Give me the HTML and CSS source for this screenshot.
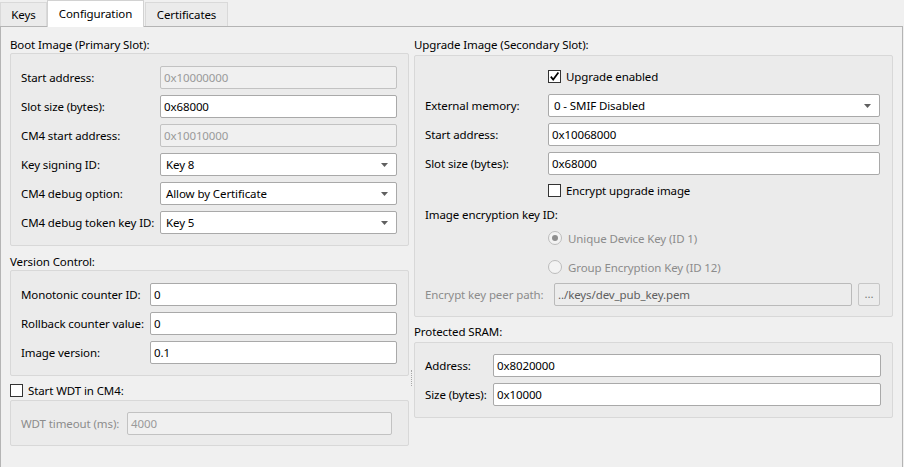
FILE: index.html
```html
<!DOCTYPE html>
<html>
<head>
<meta charset="utf-8">
<link rel="stylesheet" href="styles.css">
</head>
<body>
<div class="tabs">
  <div class="tab tab-keys">Keys</div>
  <div class="tab tab-config active">Configuration</div>
  <div class="tab tab-certs">Certificates</div>
</div>
<div class="pane">
  <div class="col col-left">
    <div class="title">Boot Image (Primary Slot):</div>
    <div class="box box-boot">
      <div class="grid grid-boot">
        <div class="lbl">Start address:</div><div class="field disabled">0x10000000</div>
        <div class="lbl">Slot size (bytes):</div><div class="field">0x68000</div>
        <div class="lbl">CM4 start address:</div><div class="field disabled">0x10010000</div>
        <div class="lbl">Key signing ID:</div><div class="field combo"><span>Key 8</span><svg class="arrow" width="7" height="4" viewBox="0 0 7 4"><path d="M0 0H7L3.5 4Z"/></svg></div>
        <div class="lbl">CM4 debug option:</div><div class="field combo"><span>Allow by Certificate</span><svg class="arrow" width="7" height="4" viewBox="0 0 7 4"><path d="M0 0H7L3.5 4Z"/></svg></div>
        <div class="lbl">CM4 debug token key ID:</div><div class="field combo"><span>Key 5</span><svg class="arrow" width="7" height="4" viewBox="0 0 7 4"><path d="M0 0H7L3.5 4Z"/></svg></div>
      </div>
    </div>

    <div class="title title-version">Version Control:</div>
    <div class="box box-version">
      <div class="grid grid-version">
        <div class="lbl">Monotonic counter ID:</div><div class="field">0</div>
        <div class="lbl">Rollback counter value:</div><div class="field">0</div>
        <div class="lbl">Image version:</div><div class="field">0.1</div>
      </div>
    </div>

    <div class="check-line wdt-check"><span class="cb"></span><span>Start WDT in CM4:</span></div>
    <div class="box box-wdt">
      <div class="grid grid-wdt">
        <div class="lbl muted">WDT timeout (ms):</div><div class="field disabled">4000</div>
      </div>
    </div>
  </div>

  <div class="splitter"><div class="grip"></div></div>

  <div class="col col-right">
    <div class="title">Upgrade Image (Secondary Slot):</div>
    <div class="box box-upgrade">
      <div class="check-line tall indent"><span class="cb checked"><svg width="11" height="11" viewBox="0 0 11 11"><path d="M1.8 5.6L4.2 8.6L9.4 1.6" fill="none" stroke="#000" stroke-width="1.7"/></svg></span><span>Upgrade enabled</span></div>
      <div class="grid grid-upgrade r-gap">
        <div class="lbl">External memory:</div><div class="field combo"><span>0 - SMIF Disabled</span><svg class="arrow" width="7" height="4" viewBox="0 0 7 4"><path d="M0 0H7L3.5 4Z"/></svg></div>
        <div class="lbl">Start address:</div><div class="field">0x10068000</div>
        <div class="lbl">Slot size (bytes):</div><div class="field">0x68000</div>
      </div>
      <div class="check-line indent m-encrypt"><span class="cb"></span><span>Encrypt upgrade image</span></div>
      <div class="line m-keylabel">Image encryption key ID:</div>
      <div class="check-line indent muted m-radio1"><span class="radio on"><span class="dot"></span></span><span>Unique Device Key (ID 1)</span></div>
      <div class="check-line indent muted m-radio2"><span class="radio"></span><span>Group Encryption Key (ID 12)</span></div>
      <div class="grid grid-peer">
        <div class="lbl muted">Encrypt key peer path:</div><div class="field disabled peer">../keys/dev_pub_key.pem</div><div class="btn">...</div>
      </div>
    </div>

    <div class="title title-sram">Protected SRAM:</div>
    <div class="box box-sram">
      <div class="grid grid-sram">
        <div class="lbl">Address:</div><div class="field">0x8020000</div>
        <div class="lbl">Size (bytes):</div><div class="field">0x10000</div>
      </div>
    </div>
  </div>
</div>
</body>
</html>
```
FILE: styles.css
```css
html, body {
  margin: 0;
  padding: 0;
}
body {
  width: 904px;
  height: 467px;
  overflow: hidden;
  background: #f0f0f0;
  font-family: "Noto Sans", "Open Sans", sans-serif;
  font-size: 11.5px;
  letter-spacing: -0.1px;
  color: #000;
}

/* tabs */
.tabs {
  display: flex;
  align-items: flex-end;
  height: 26px;
}
.tab {
  box-sizing: border-box;
  height: 24px;
  border: 1px solid #d9d9d9;
  border-bottom: none;
  background: #ebebeb;
  text-align: center;
  line-height: 23px;
}
.tab-keys { width: 47px; }
.tab-config { width: 97px; }
.tab-certs { width: 83px; margin-left: 1px; }
.tab.active {
  position: relative;
  z-index: 1;
  height: 27px;
  margin-bottom: -1px;
  background: #fff;
  border-color: #d2d2d2;
  line-height: 25px;
}

/* pane */
.pane {
  box-sizing: border-box;
  width: 903px;
  height: 441px;
  border: 1px solid #b4b4b4;
  border-bottom: none;
  padding-left: 9px;
  display: flex;
  align-items: flex-start;
}
.col-left { width: 399px; }
.col-right { width: 479px; }
.splitter { width: 5px; display: flex; justify-content: center; }
.grip {
  width: 0;
  height: 16px;
  margin-top: 343px;
  border-left: 1px dotted #a8a8a8;
}

.title {
  height: 16px;
  line-height: 16px;
  margin-top: 10px;
}
.title-version { margin-top: 8px; }
.title-sram { margin-top: 7px; }

.box {
  border: 1px solid #d8d8d8;
  border-radius: 2px;
  background: #ebebeb;
}
.box-boot { padding: 12px 11px 11px 10px; }
.box-version { padding: 12px 11px 11px 10px; }
.box-wdt { padding: 11px 16px 10px 10px; margin-top: 2px; }
.box-upgrade { padding: 9px 12px 10px 10px; margin-top: 2px; }
.box-sram { padding: 11px 11px 11px 10px; margin-top: 2px; }

.grid {
  display: grid;
  grid-auto-rows: 23px;
  row-gap: 6px;
  align-items: center;
}
.grid-boot { grid-template-columns: 139px 1fr; }
.grid-version { grid-template-columns: 129px 1fr; }
.grid-wdt { grid-template-columns: 106px 1fr; }
.grid-upgrade { grid-template-columns: 123px 1fr; }
.r-gap { margin-top: 6px; }
.grid-peer { grid-template-columns: 123px 1fr 22px; column-gap: 6px; margin-top: 8px; }
.grid-sram { grid-template-columns: 68px 1fr; }

.lbl { white-space: nowrap; }
.muted { color: #8c8c8c; }

.field {
  box-sizing: border-box;
  height: 23px;
  border: 1px solid #a9a9a9;
  border-radius: 2px;
  background: #fff;
  padding: 0 3px;
  line-height: 21px;
  white-space: nowrap;
  overflow: hidden;
}
.field.disabled {
  background: #f0f0f0;
  border-color: #c2c2c2;
  color: #9a9a9a;
}
.field.peer {
  background: #ececec;
  border-color: #bababa;
  color: #5e5e5e;
}
.combo {
  display: flex;
  justify-content: space-between;
  align-items: center;
  padding: 0 8px 0 5px;
}
.arrow { fill: #606060; }

.btn {
  box-sizing: border-box;
  height: 23px;
  border: 1px solid #c6c6c6;
  border-radius: 2px;
  background: #ececec;
  color: #7a7a7a;
  text-align: center;
  line-height: 19px;
}

.check-line {
  display: flex;
  align-items: center;
  height: 16px;
  gap: 5px;
}
.check-line.tall { height: 23px; }
.indent { padding-left: 123px; }
.wdt-check { margin-top: 6px; }
.m-encrypt { margin-top: 7px; }
.m-radio1 { margin-top: 7px; gap: 6px; }
.m-radio2 { margin-top: 13px; gap: 6px; }
.line { height: 16px; line-height: 16px; }
.m-keylabel { margin-top: 9px; }

.cb {
  box-sizing: border-box;
  width: 13px;
  height: 13px;
  border: 1px solid #333;
  background: #fff;
  display: flex;
  align-items: center;
  justify-content: center;
  flex: none;
}
.radio {
  box-sizing: border-box;
  width: 14px;
  height: 14px;
  border: 1px solid #bcbcbc;
  border-radius: 50%;
  background: #f3f3f3;
  display: flex;
  align-items: center;
  justify-content: center;
  flex: none;
}
.dot {
  width: 6px;
  height: 6px;
  border-radius: 50%;
  background: #8e8e8e;
}
```
